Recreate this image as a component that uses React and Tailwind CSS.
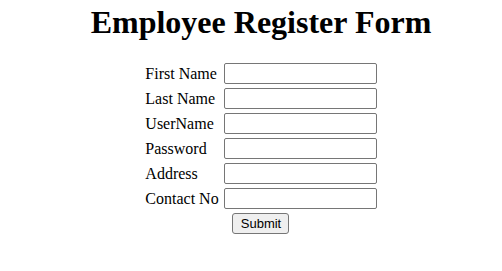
import { useState } from 'react';

const fields = [
  { name: 'firstName', label: 'First Name', type: 'text' },
  { name: 'lastName', label: 'Last Name', type: 'text' },
  { name: 'userName', label: 'UserName', type: 'text' },
  { name: 'password', label: 'Password', type: 'password' },
  { name: 'address', label: 'Address', type: 'text' },
  { name: 'contactNo', label: 'Contact No', type: 'text' },
];

export default function App() {
  const [form, setForm] = useState({});

  const handleChange = (e) => {
    setForm({ ...form, [e.target.name]: e.target.value });
  };

  const handleSubmit = (e) => {
    e.preventDefault();
  };

  return (
    <div className="min-h-screen w-full bg-white pl-[20px] flex flex-col items-center font-['Liberation_Serif',serif] text-black">
      <h1 className="mt-[4px] text-[32px] leading-[37px] font-bold">
        Employee Register Form
      </h1>

      <form
        onSubmit={handleSubmit}
        className="mt-[22px] grid grid-cols-[auto_auto] gap-x-[5px] gap-y-[4px] items-center"
      >
        {fields.map((f) => (
          <div key={f.name} className="contents">
            <label htmlFor={f.name} className="text-[16px] leading-[18px]">
              {f.label}
            </label>
            <input
              id={f.name}
              name={f.name}
              type={f.type}
              value={form[f.name] || ''}
              onChange={handleChange}
              className="w-[153px] h-[21px] px-[2px] bg-white border border-[#767676] rounded-[2px] text-[13px] font-['Liberation_Sans',sans-serif] focus:outline-none"
            />
          </div>
        ))}
        <div className="col-span-2 flex justify-center">
          <button
            type="submit"
            className="w-[57px] h-[21px] bg-[#efefef] border border-[#767676] rounded-[3px] text-[13px] leading-[15px] font-['Liberation_Sans',sans-serif]"
          >
            Submit
          </button>
        </div>
      </form>
    </div>
  );
}
